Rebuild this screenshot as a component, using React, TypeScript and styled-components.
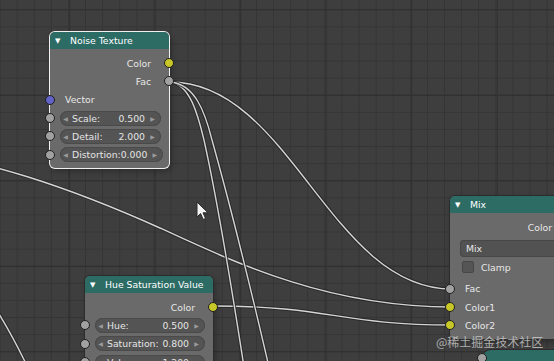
import React from 'react'
import styled, { createGlobalStyle } from 'styled-components'

const GlobalStyle = createGlobalStyle`
  html, body {
    margin: 0;
    padding: 0;
    background: #3d3d3d;
  }
  body {
    font-family: "DejaVu Sans", "Noto Sans CJK SC", sans-serif;
  }
`

const Canvas = styled.div`
  position: relative;
  width: 554px;
  height: 361px;
  overflow: hidden;
  background-color: #3e3e3e;
  background-image:
    linear-gradient(to right, #2f2f2f 1px, transparent 1px),
    linear-gradient(to bottom, #2f2f2f 1px, transparent 1px),
    linear-gradient(to right, #353535 1px, transparent 1px),
    linear-gradient(to bottom, #353535 1px, transparent 1px);
  background-size: 85.5px 85.5px, 85.5px 85.5px, 17.1px 17.1px, 17.1px 17.1px;
  background-position: 69.2px 9.3px, 69.2px 9.3px, 16.7px 9.3px, 16.7px 9.3px;
`

const Wires = styled.svg`
  position: absolute;
  left: 0;
  top: 0;
  width: 554px;
  height: 361px;
`

type SocketKind = 'color' | 'float' | 'vector'

const socketColors: Record<SocketKind, string> = {
  color: '#c7c729',
  float: '#a1a1a1',
  vector: '#6363c7',
}

// nodes sit on a free canvas, so they are placed by coordinates
const Node = styled.div<{ $x: number; $y: number; $w: number; $selected?: boolean }>`
  position: absolute;
  left: ${p => p.$x}px;
  top: ${p => p.$y}px;
  width: ${p => p.$w}px;
  border-radius: 5px;
  background: #6a6a6a;
  color: #e8e8e8;
  font-size: 9.3px;
  box-shadow: 0 0 0 1px ${p => (p.$selected ? '#f0f0f0' : '#2c2c2c')},
    2px 3px 6px rgba(0, 0, 0, 0.3);
`

const Header = styled.div`
  height: 17px;
  display: flex;
  align-items: center;
  gap: 8px;
  padding-left: 5px;
  border-radius: 5px 5px 0 0;
  background: #2d6c65;
  color: #ffffff;
  white-space: nowrap;
`

const Toggle = styled.span`
  font-size: 7px;
  width: 7px;
`

const Body = styled.div<{ $padBottom?: number }>`
  padding: 5px 0 ${p => p.$padBottom ?? 4}px;
`

const Row = styled.div<{ $align?: 'left' | 'right'; $gap?: number }>`
  position: relative;
  height: 18.3px;
  margin-top: ${p => p.$gap ?? 0}px;
  display: flex;
  align-items: center;
  justify-content: ${p => (p.$align === 'right' ? 'flex-end' : 'flex-start')};
  padding: 0 18px 0 15px;
  white-space: nowrap;
`

const FieldRow = styled(Row)`
  padding: 0 8px 0 10px;
`

const Socket = styled.span<{ $side: 'left' | 'right'; $kind: SocketKind }>`
  position: absolute;
  top: 50%;
  left: ${p => (p.$side === 'left' ? '0' : '100%')};
  width: 8px;
  height: 8px;
  border-radius: 50%;
  background: ${p => socketColors[p.$kind]};
  border: 1px solid #1f1f1f;
  transform: translate(-50%, -50%);
`

const Field = styled.div`
  flex: 1;
  height: 15px;
  display: flex;
  align-items: center;
  padding: 0 5px 0 2px;
  border-radius: 8px;
  background: #545454;
  box-shadow: inset 0 0 0 1px #4a4a4a;
  color: #e4e4e4;
`

const Arrow = styled.span`
  width: 7px;
  text-align: center;
  font-size: 6px;
  color: #9a9a9a;
`

const FieldLabel = styled.span`
  flex: 1 1 auto;
  padding-left: 3px;
`

const FieldValue = styled.span`
  margin-right: 4px;
`

const Dropdown = styled.div`
  flex: 1;
  height: 17px;
  display: flex;
  align-items: center;
  padding-left: 6px;
  margin-right: -20px;
  border-radius: 4px;
  background: #525252;
  box-shadow: inset 0 0 0 1px #474747;
`

const CheckRow = styled(Row)`
  height: 19px;
  padding-left: 12px;
  gap: 7px;
`

const Checkbox = styled.span`
  width: 10px;
  height: 10px;
  border-radius: 2px;
  background: #555555;
  border: 1px solid #464646;
`

const Collapsed = styled.div<{ $x: number; $y: number }>`
  position: absolute;
  left: ${p => p.$x}px;
  top: ${p => p.$y}px;
  width: 120px;
  height: 18px;
  border-radius: 9px;
  background: #2d6c65;
  box-shadow: 0 0 0 1px #2c2c2c;
`

const Watermark = styled.div`
  position: absolute;
  left: 436px;
  top: 335px;
  font-family: "Noto Sans CJK SC", "DejaVu Sans", sans-serif;
  font-size: 12px;
  line-height: 14px;
  color: rgba(215, 215, 215, 0.75);
  white-space: nowrap;
`

const Cursor = styled.svg`
  position: absolute;
  left: 196px;
  top: 201px;
`

const wirePaths = [
  'M-60 157 C-20 160, 60 183, 160 228 C240 265, 330 307, 452 307',
  'M213 306 C330 306, 340 325, 452 325',
  'M170 82 C290 82, 330 289, 452 289',
  'M170 82 C190 84, 198 115, 204 140 C214 185, 226 250, 246 380',
  'M170 82 C195 84, 205 112, 212 140 C226 190, 242 250, 272 380',
  'M-8 303 Q10 330, 30 372',
]

type Prop = { label: string; value: string }

const PropField = ({ label, value }: Prop) => (
  <FieldRow>
    <Socket $side="left" $kind="float" />
    <Field>
      <Arrow>◀</Arrow>
      <FieldLabel>{label}</FieldLabel>
      <FieldValue>{value}</FieldValue>
      <Arrow>▶</Arrow>
    </Field>
  </FieldRow>
)

const App = () => (
  <Canvas>
    <GlobalStyle />
    <Wires viewBox="0 0 554 361">
      {wirePaths.map((d, i) => (
        <g key={i} fill="none">
          <path d={d} stroke="#242424" strokeWidth={3.4} strokeOpacity={0.8} />
          <path d={d} stroke="#d4d4d4" strokeWidth={1.4} />
        </g>
      ))}
    </Wires>

    <Node $x={50} $y={32} $w={119} $selected>
      <Header>
        <Toggle>▼</Toggle>
        Noise Texture
      </Header>
      <Body>
        <Row $align="right">
          Color
          <Socket $side="right" $kind="color" />
        </Row>
        <Row $align="right">
          Fac
          <Socket $side="right" $kind="float" />
        </Row>
        <Row>
          <Socket $side="left" $kind="vector" />
          Vector
        </Row>
        <PropField label="Scale:" value="0.500" />
        <PropField label="Detail:" value="2.000" />
        <PropField label="Distortion:" value="0.000" />
      </Body>
    </Node>

    <Node $x={85} $y={276} $w={128}>
      <Header>
        <Toggle>▼</Toggle>
        Hue Saturation Value
      </Header>
      <Body>
        <Row $align="right">
          Color
          <Socket $side="right" $kind="color" />
        </Row>
        <PropField label="Hue:" value="0.500" />
        <PropField label="Saturation:" value="0.800" />
        <PropField label="Value:" value="1.200" />
      </Body>
    </Node>

    <Node $x={450} $y={196} $w={120}>
      <Header>
        <Toggle>▼</Toggle>
        Mix
      </Header>
      <Body $padBottom={5}>
        <Row $align="right">
          Color
          <Socket $side="right" $kind="color" />
        </Row>
        <FieldRow $gap={3}>
          <Dropdown>Mix</Dropdown>
        </FieldRow>
        <CheckRow>
          <Checkbox />
          Clamp
        </CheckRow>
        <Row $gap={3}>
          <Socket $side="left" $kind="float" />
          Fac
        </Row>
        <Row>
          <Socket $side="left" $kind="color" />
          Color1
        </Row>
        <Row>
          <Socket $side="left" $kind="color" />
          Color2
        </Row>
      </Body>
    </Node>

    <Collapsed $x={482} $y={350}>
      <Socket $side="left" $kind="float" style={{ top: 8 }} />
    </Collapsed>

    <Cursor width="14" height="20" viewBox="0 0 14 20">
      <path
        d="M1 1 L1 16 L4.6 12.6 L7.2 18.4 L9.6 17.4 L7 11.8 L12 11.8 Z"
        fill="#f4f4f4"
        stroke="#2a2a2a"
        strokeWidth={1}
        strokeLinejoin="round"
      />
    </Cursor>

    <Watermark>@稀土掘金技术社区</Watermark>
  </Canvas>
)

export default App
